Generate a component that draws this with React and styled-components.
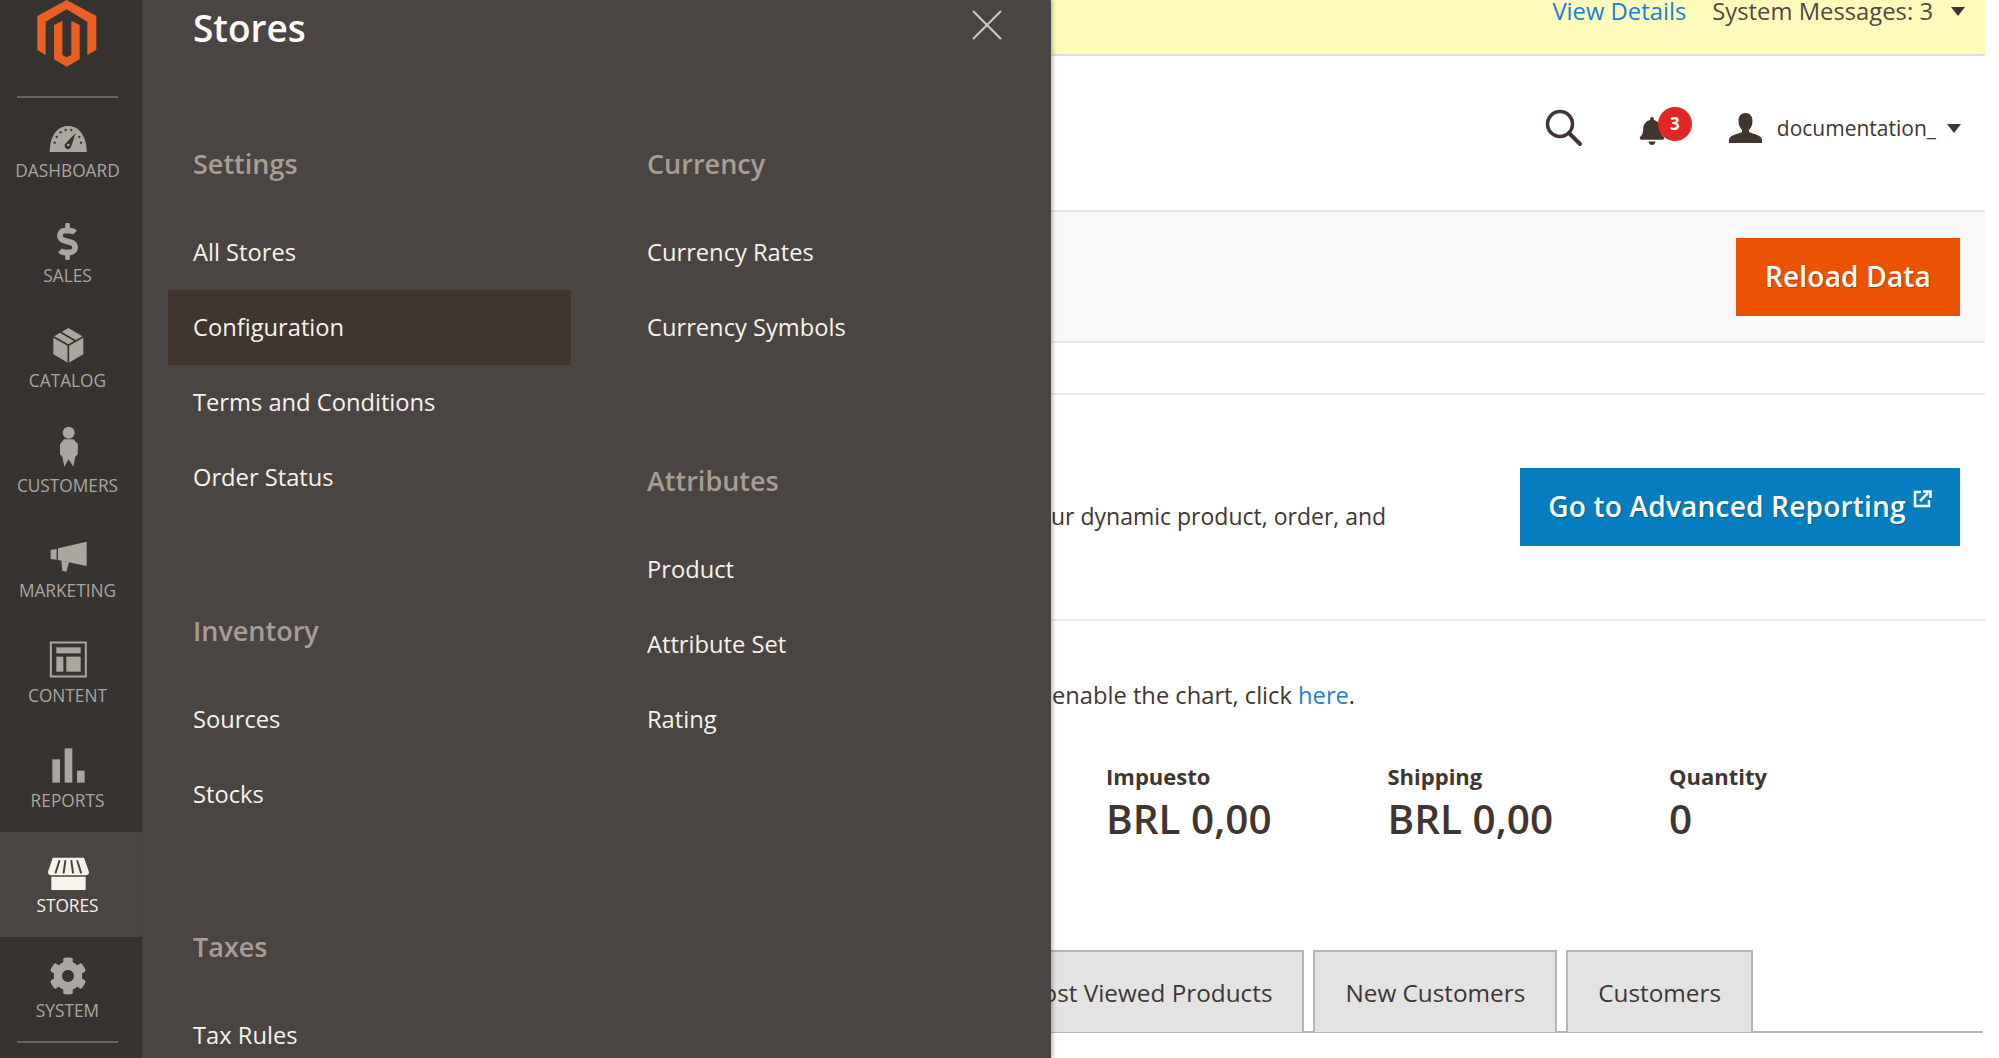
import React from "react";
import styled, { createGlobalStyle } from "styled-components";
import { FaBell, FaCog, FaDollarSign } from "react-icons/fa";

const GlobalStyle = createGlobalStyle`
    html, body {
        margin: 0;
        height: 100%;
        background: #fff;
        overflow: hidden;
    }
    * { box-sizing: border-box; }
`
const Page = styled.div`
    display: flex;
    height: 1058px;
    width: 1999px;
    overflow: hidden;
    font-family: "Open Sans", "Liberation Sans", sans-serif;
    color: #41362f;
    background: #fff;
`
const Sidebar = styled.nav`
    width: 142px;
    flex: none;
    background: #373330;
    display: flex;
    flex-direction: column;
`
const LogoBox = styled.div`
    height: 97px;
    flex: none;
    display: flex;
    justify-content: center;
    padding-right: 7px;
`
const Rule = styled.div`
    height: 2px;
    margin: -1px 24px -1px 17px;
    background: #6e655e;
    position: relative;
    flex: none;
`
const NavItem = styled.div`
    height: 105px;
    flex: none;
    padding: 14px 7px 0 0;
    display: flex;
    flex-direction: column;
    align-items: center;
    background: ${p => (p.$active ? "#4a4542" : "transparent")};
    color: ${p => (p.$active ? "#f7f3eb" : "#aaa6a0")};
`
const NavIcon = styled.div`
    height: 50px;
    width: 60px;
    display: flex;
    align-items: center;
    justify-content: center;
    svg { display: block; }
`
const NavLabel = styled.div`
    font-size: 17.3px;
    line-height: 20px;
    height: 20px;
    text-transform: uppercase;
`
const Panel = styled.aside`
    width: 909px;
    flex: none;
    background: #4a4542;
    position: relative;
    z-index: 2;
    box-shadow: 2px 0 4px rgba(0, 0, 0, 0.25);
    padding-left: 26px;
    overflow: hidden;
`
const PanelTop = styled.div`
    height: 144px;
    display: flex;
    justify-content: space-between;
    align-items: flex-start;
    padding-right: 49px;
`
const PanelTitle = styled.h2`
    margin: 0 0 0 25px;
    font-size: 37px;
    line-height: 56px;
    font-weight: 600;
    color: #fff;
`
const CloseBtn = styled.div`
    margin-top: 10px;
    width: 30px;
    height: 30px;
`
const Columns = styled.div`
    display: grid;
    grid-template-columns: 403px 403px;
    column-gap: 51px;
`
const MenuGroup = styled.div`
    margin-bottom: 95.5px;
`
const GroupTitle = styled.div`
    font-size: 27px;
    line-height: 40px;
    font-weight: 600;
    color: #a79d95;
    padding-left: 25px;
    margin-bottom: 31px;
`
const MenuRow = styled.div`
    height: 75px;
    line-height: 75px;
    padding-left: 25px;
    font-size: 23.7px;
    color: #f7f3eb;
    background: ${p => (p.$selected ? "#40362f" : "transparent")};
`
const Main = styled.main`
    flex: none;
    width: 934px;
    display: flex;
    flex-direction: column;
    overflow: hidden;
`
const MessageBar = styled.div`
    height: 56px;
    flex: none;
    background: #fffbbb;
    border-bottom: 2px solid #dedede;
    display: flex;
    justify-content: flex-end;
    padding-right: 20px;
    font-size: 23.8px;
    line-height: 22px;
    color: #514943;
`
const MessageLink = styled.a`
    color: #1a7fd4;
    margin-right: 26px;
`
const Caret = styled.span`
    width: 0;
    height: 0;
    border-left: 7px solid transparent;
    border-right: 7px solid transparent;
    border-top: 9px solid #41362f;
    margin-left: ${p => p.$gap}px;
    margin-top: ${p => p.$top || 0}px;
    flex: none;
`
const Header = styled.header`
    height: 156px;
    flex: none;
    display: flex;
    justify-content: flex-end;
    align-items: center;
    padding: 0 24px 10px 0;
    border-bottom: 2px solid #e3e3e3;
`
const Bell = styled.div`
    position: relative;
    width: 30px;
    height: 32px;
    margin-left: 55px;
    margin-right: 61px;
    color: #41362f;
`
const BellIcon = styled(FaBell)`
    margin-top: 5px;
`
const BellBadge = styled.span`
    position: absolute;
    top: -5px;
    left: 20px;
    width: 34px;
    height: 34px;
    border-radius: 50%;
    background: #e22626;
    color: #fff;
    font-size: 17px;
    font-weight: 700;
    line-height: 34px;
    text-align: center;
`
const UserName = styled.span`
    font-size: 21px;
    margin-left: 15px;
`
const ActionBand = styled.div`
    height: 131px;
    flex: none;
    background: #f8f8f8;
    border-bottom: 2px solid #e8e8e8;
    display: flex;
    justify-content: flex-end;
    align-items: center;
    padding-right: 25px;
`
const ActionButton = styled.div`
    height: 78px;
    padding-bottom: 2px;
    background: ${p => p.$bg};
    color: #fff;
    font-size: 28px;
    font-weight: 600;
    letter-spacing: 0.2px;
    display: flex;
    align-items: center;
    justify-content: center;
    width: ${p => p.$w}px;
    text-shadow: 1px 1px 1px rgba(0, 0, 0, 0.25);
`
const ExternalIcon = styled.svg`
    margin: -14px 0 0 7px;
`
const Spacer = styled.div`
    height: 52px;
    flex: none;
    border-bottom: 2px solid #e8e8e8;
`
const ReportSection = styled.section`
    height: 226px;
    flex: none;
    border-bottom: 2px solid #e8e8e8;
    display: flex;
    align-items: center;
    justify-content: space-between;
    padding-right: 25px;
    font-size: 23px;
`
const ReportText = styled.span`
    margin-top: 18px;
`
const ChartSection = styled.section`
    display: flex;
    flex-direction: column;
    padding-top: 56px;
`
const ChartNote = styled.div`
    font-size: 23.7px;
    line-height: 36px;
    padding-left: 1px;
`
const NoteLink = styled.a`
    color: #1a7fd4;
`
const Stats = styled.div`
    display: flex;
    padding: 45px 0 0 55px;
    height: 237px;
`
const Stat = styled.div`
    width: 281.5px;
`
const StatLabel = styled.div`
    font-size: 22px;
    font-weight: 700;
    line-height: 36px;
`
const StatValue = styled.div`
    font-size: 40.5px;
    font-weight: 600;
    line-height: 50px;
`
const Tabs = styled.div`
    display: flex;
    justify-content: flex-end;
    gap: 9px;
    height: 83px;
    margin-right: 2px;
    padding-right: 230px;
    border-bottom: 2px solid #b5b5b5;
`
const Tab = styled.div`
    flex: none;
    height: 82px;
    padding: 0 30px;
    background: #e3e3e3;
    border: 2px solid #b5b5b5;
    border-bottom: 0;
    font-size: 24.3px;
    line-height: 82px;
    white-space: nowrap;
`

const BOX = "112 0 180 150"
const Glyph = ({ children }) => (
    <svg width="60" height="50" viewBox={BOX} fill="currentColor">{children}</svg>
)
const DARK = "#373330"

const navItems = [
    {
        label: "Dashboard",
        icon: (
            <Glyph>
                <path d="M147 123 C147 76 170 45 202 45 C235 45 258 76 258 123 Z" />
                <g fill={DARK}>
                    <circle cx="162" cy="95" r="3.5" /><circle cx="168" cy="78" r="3.5" />
                    <circle cx="180" cy="64" r="3.5" /><circle cx="195" cy="57" r="3.5" />
                    <circle cx="212" cy="57" r="3.5" /><circle cx="241" cy="95" r="3.5" />
                    <circle cx="236" cy="78" r="3.5" />
                    <path d="M225 66 L211 108 A10 10 0 1 1 194 98 Z" />
                </g>
                <circle cx="203" cy="102" r="4" />
            </Glyph>
        ),
    },
    { label: "Sales", icon: <FaDollarSign size={37} /> },
    {
        label: "Catalog",
        icon: (
            <Glyph>
                <path d="M203 21 L248 47 L248 100 L203 126 L158 100 L158 47 Z" />
                <path d="M158 47 L203 73 L248 47 M203 73 L203 126 M180 34 L225 60" fill="none" stroke={DARK} strokeWidth="5" />
            </Glyph>
        ),
    },
    {
        label: "Customers",
        icon: (
            <Glyph>
                <circle cx="204" cy="20" r="18" />
                <path d="M190 40 L218 40 L232 55 L231 85 L224 92 L218 122 L204 100 L191 122 L185 92 L178 85 L178 55 Z" />
            </Glyph>
        ),
    },
    {
        label: "Marketing",
        icon: (
            <Glyph>
                <path d="M172 52 L258 32 L258 105 L172 87 Z" />
                <path d="M150 57 L168 54 L168 86 L150 84 Z" />
                <path d="M182 89 L205 94 L197 122 L185 119 Z" />
            </Glyph>
        ),
    },
    {
        label: "Content",
        icon: (
            <Glyph>
                <rect x="150.5" y="19.5" width="105" height="102" fill="none" stroke="currentColor" strokeWidth="6" />
                <rect x="167" y="34" width="73" height="18" />
                <rect x="167" y="62" width="21" height="45" />
                <rect x="197" y="62" width="43" height="45" />
            </Glyph>
        ),
    },
    {
        label: "Reports",
        icon: (
            <Glyph>
                <rect x="155" y="55" width="23" height="70" />
                <rect x="192" y="22" width="23" height="103" />
                <rect x="229" y="89" width="23" height="36" />
            </Glyph>
        ),
    },
    {
        label: "Stores",
        active: true,
        icon: (
            <Glyph>
                <path d="M156 35 L250 35 L265 78 Q265 88 255 88 L152 88 Q142 88 142 78 Z" />
                <path d="M152 92 L255 92 L255 132 L152 132 Z" />
                <path d="M176 45 L165 80 M194 45 L189 80 M212 45 L217 80 M230 45 L241 80" fill="none" stroke="#4a4542" strokeWidth="6" strokeLinecap="round" />
            </Glyph>
        ),
    },
    { label: "System", icon: <FaCog size={38} /> },
]

const stats = [
    { label: "Impuesto", value: "BRL 0,00" },
    { label: "Shipping", value: "BRL 0,00" },
    { label: "Quantity", value: "0" },
]

const Group = ({ title, items, selected }) => (
    <MenuGroup>
        <GroupTitle>{title}</GroupTitle>
        {items.map((item) => (
            <MenuRow key={item} $selected={item === selected}>{item}</MenuRow>
        ))}
    </MenuGroup>
)

const App = () => {
    return (
        <Page>
            <GlobalStyle />
            <Sidebar>
                <LogoBox>
                    <svg width="72" height="68" viewBox="99 0 216 204">
                        <path fill="#ec5f22" d="M203 0 L292 48 L292 150 L265 165 L265 65 L203 28 L140 65 L140 165 L115 150 L115 48 Z" />
                        <path fill="#ec5f22" d="M165 75 L190 62 L190 165 L203 172 L217 165 L217 62 L242 75 L242 178 L203 200 L165 178 Z" />
                    </svg>
                </LogoBox>
                <Rule />
                {navItems.map((item) => (
                    <NavItem key={item.label} $active={item.active}>
                        <NavIcon>{item.icon}</NavIcon>
                        <NavLabel>{item.label}</NavLabel>
                    </NavItem>
                ))}
                <Rule />
            </Sidebar>
            <Panel>
                <PanelTop>
                    <PanelTitle>Stores</PanelTitle>
                    <CloseBtn>
                        <svg width="30" height="30" viewBox="0 0 30 30">
                            <path d="M1 1 L29 29 M29 1 L1 29" stroke="#cfcac5" strokeWidth="2" />
                        </svg>
                    </CloseBtn>
                </PanelTop>
                <Columns>
                    <div>
                        <Group title="Settings" items={["All Stores", "Configuration", "Terms and Conditions", "Order Status"]} selected="Configuration" />
                        <Group title="Inventory" items={["Sources", "Stocks"]} />
                        <Group title="Taxes" items={["Tax Rules"]} />
                    </div>
                    <div>
                        <Group title="Currency" items={["Currency Rates", "Currency Symbols"]} />
                        <Group title="Attributes" items={["Product", "Attribute Set", "Rating"]} />
                    </div>
                </Columns>
            </Panel>
            <Main>
                <MessageBar>
                    <MessageLink>View Details</MessageLink>
                    <span>System Messages: 3</span>
                    <Caret $gap={18} $top={7} />
                </MessageBar>
                <Header>
                    <svg width="38" height="38" viewBox="0 0 38 38">
                        <circle cx="15" cy="15" r="12.5" fill="none" stroke="#41362f" strokeWidth="3.5" />
                        <path d="M24 24 L35 35" stroke="#41362f" strokeWidth="4" strokeLinecap="round" />
                    </svg>
                    <Bell>
                        <BellIcon size={28} />
                        <BellBadge>3</BellBadge>
                    </Bell>
                    <svg width="33" height="30" viewBox="0 0 33 30">
                        <path fill="#41362f" d="M16.5 0 C21 0 23.5 3 23.5 8 C23.5 12 22 15 20 17 L20 19 C24 21 33 22 33 27 L33 30 L0 30 L0 27 C0 22 9 21 13 19 L13 17 C11 15 9.5 12 9.5 8 C9.5 3 12 0 16.5 0 Z" />
                    </svg>
                    <UserName>documentation_</UserName>
                    <Caret $gap={11} />
                </Header>
                <ActionBand>
                    <ActionButton $bg="#eb5202" $w={224}>Reload Data</ActionButton>
                </ActionBand>
                <Spacer />
                <ReportSection>
                    <ReportText>ur dynamic product, order, and</ReportText>
                    <ActionButton $bg="#057dbe" $w={440}>
                        Go to Advanced Reporting
                        <ExternalIcon width="19" height="18" viewBox="0 0 19 18">
                            <path d="M8 2 L2 2 L2 16 L16 16 L16 10" fill="none" stroke="#fff" strokeWidth="2.5" />
                            <path d="M7 11 L15 3 M10 1.5 L17.5 1.5 L17.5 8" fill="none" stroke="#fff" strokeWidth="2.5" />
                        </ExternalIcon>
                    </ActionButton>
                </ReportSection>
                <ChartSection>
                    <ChartNote>enable the chart, click <NoteLink>here</NoteLink>.</ChartNote>
                    <Stats>
                        {stats.map((s) => (
                            <Stat key={s.label}>
                                <StatLabel>{s.label}</StatLabel>
                                <StatValue>{s.value}</StatValue>
                            </Stat>
                        ))}
                    </Stats>
                    <Tabs>
                        <Tab>Most Viewed Products</Tab>
                        <Tab>New Customers</Tab>
                        <Tab>Customers</Tab>
                    </Tabs>
                </ChartSection>
            </Main>
        </Page>
    )
}

export default App
